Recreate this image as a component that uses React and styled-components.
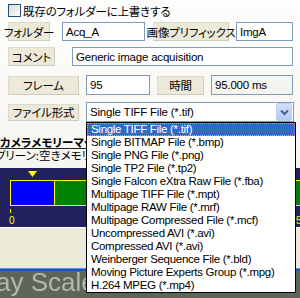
import React from "react";
import styled, { createGlobalStyle } from "styled-components";

const GlobalStyle = createGlobalStyle`
  * { box-sizing: border-box; }
  body {
    margin: 0;
    font-family: "Liberation Sans", "Noto Sans CJK JP", sans-serif;
    font-size: 11px;
  }
`;

const jp = `"Noto Sans CJK JP", "Liberation Sans", sans-serif`;

const Screen = styled.div`
  position: relative;
  width: 300px;
  height: 298px;
  overflow: hidden;
  display: flex;
  flex-direction: column;
`;

const FormPanel = styled.div`
  background: linear-gradient(#fdfdfc, #f6f5f0);
  padding: 4px 0 0 8px;
  display: flex;
  flex-direction: column;
  height: 168px;
`;

const Row = styled.div`
  display: flex;
  align-items: center;
  height: ${(p) => p.h || 19}px;
  margin-top: ${(p) => p.mt || 0}px;
`;

const CheckBox = styled.span`
  width: 13px;
  height: 13px;
  border: 1px solid #1c5180;
  background: linear-gradient(135deg, #dcdbd5, #fbfbfa);
  margin-right: 2px;
`;

const JpText = styled.span`
  font-family: ${jp};
  font-size: 11.5px;
  font-feature-settings: "palt";
  letter-spacing: -0.2px;
  color: #000;
  white-space: nowrap;
`;

const Caption = styled.div`
  width: ${(p) => p.w}px;
  height: ${(p) => p.h || 19}px;
  margin-right: ${(p) => p.mr || 0}px;
  background: #ece9d8;
  border: 1px solid #dedbcc;
  border-right-color: #cfccbc;
  border-bottom-color: #cfccbc;
  display: flex;
  align-items: center;
  justify-content: center;
  flex-shrink: 0;
`;

const Field = styled.div`
  width: ${(p) => p.w}px;
  height: ${(p) => p.h || 19}px;
  margin-right: ${(p) => p.mr || 0}px;
  border: 1px solid #7f9db9;
  background: ${(p) => (p.readOnly ? "#f5f4ef" : "#fff")};
  padding-left: 3px;
  display: flex;
  align-items: center;
  font-size: 11.5px;
  letter-spacing: -0.2px;
  color: #000;
  white-space: nowrap;
  overflow: hidden;
  flex-shrink: 0;
`;

const Combo = styled(Field)`
  padding-right: 1px;
  justify-content: space-between;
`;

const DropButton = styled.span`
  width: 16px;
  height: 18px;
  border: 1px solid #b9cdf6;
  border-radius: 2px;
  background: linear-gradient(#d2defc, #b4c9f7);
  display: flex;
  align-items: center;
  justify-content: center;
`;

const MapCaption = styled.div`
  margin-top: 14px;
  margin-left: -8px;
  font-family: ${jp};
  font-feature-settings: "palt";
  font-size: 11.5px;
  font-weight: bold;
  line-height: 12px;
  white-space: nowrap;
  border-bottom: 1px solid #222;
  width: 86px;
  overflow: hidden;
`;

const MapLegend = styled.div`
  margin-left: -13px;
  font-family: ${jp};
  font-feature-settings: "palt";
  font-size: 11.5px;
  line-height: 11px;
  white-space: nowrap;
  margin-top: 1px;
  width: 99px;
  overflow: hidden;
`;

const MapArea = styled.svg`
  display: block;
  width: 300px;
  height: 59px;
`;

const StatusPanel = styled.div`
  height: 41px;
  background: #ece9d8;
  border-top: 1px solid #fff;
`;

const Taskbar = styled.div`
  height: 3px;
  background: #1553cf;
  border-top: 1px solid #5b8ee8;
`;

const Desktop = styled.div`
  flex: 1;
  background: #5e6658;
  overflow: hidden;
`;

const DesktopText = styled.div`
  font-family: "Liberation Sans", sans-serif;
  font-size: 26px;
  line-height: 26px;
  color: #b4b8aa;
  margin: -2px 0 0 -4px;
  filter: blur(0.7px);
  white-space: nowrap;
`;

const List = styled.ul`
  position: absolute;
  left: 86px;
  top: 122px;
  width: 210px;
  margin: 0;
  padding: 0;
  list-style: none;
  background: #fff;
  border: 1px solid #000;
`;

const Item = styled.li`
  height: 13px;
  line-height: 11px;
  padding-left: 3px;
  font-size: 11.5px;
  letter-spacing: -0.3px;
  white-space: nowrap;
  color: ${(p) => (p.active ? "#fff" : "#000")};
  background: ${(p) => (p.active ? "#316ac5" : "transparent")};
  border: 1px dotted ${(p) => (p.active ? "#e4a548" : "transparent")};
`;

const formats = [
  "Single TIFF File (*.tif)",
  "Single BITMAP File (*.bmp)",
  "Single PNG File (*.png)",
  "Single TP2 File (*.tp2)",
  "Single Falcon eXtra Raw File (*.fba)",
  "Multipage TIFF File (*.mpt)",
  "Multipage RAW File (*.mrf)",
  "Multipage Compressed File (*.mcf)",
  "Uncompressed AVI (*.avi)",
  "Compressed AVI (*.avi)",
  "Weinberger Sequence File (*.bld)",
  "Moving Picture Experts Group (*.mpg)",
  "H.264 MPEG (*.mp4)",
];

function Chevron() {
  return (
    <svg width="9" height="7" viewBox="0 0 9 7">
      <path d="M1 1.5 L4.5 5 L8 1.5" fill="none" stroke="#4d6185" strokeWidth="2" />
    </svg>
  );
}

function MemoryMap() {
  return (
    <MapArea viewBox="0 0 300 59">
      <rect width="300" height="59" fill="#21215e" />
      <path d="M28 3 H37 L32.5 9 Z" fill="#ffff00" />
      <rect x="10.5" y="12.5" width="44" height="25" fill="#0000ff" stroke="#ffff00" />
      <rect x="54.5" y="12.5" width="260" height="25" fill="#008000" stroke="#ffff00" />
      <rect x="10" y="41" width="1" height="4" fill="#ffff00" />
      <text x="9" y="56" fill="#ffff00" fontSize="10" fontFamily="Liberation Sans, sans-serif">0</text>
      <text x="296" y="56" fill="#ffff00" fontSize="10" fontFamily="Liberation Sans, sans-serif">5</text>
    </MapArea>
  );
}

export default function App() {
  return (
    <Screen>
      <GlobalStyle />
      <FormPanel>
        <Row h={13}>
          <CheckBox />
          <JpText>既存のフォルダーに上書きする</JpText>
        </Row>
        <Row mt={5}>
          <Caption w={42} mr={12}><JpText>フォルダー</JpText></Caption>
          <Field w={83} mr={8}>Acq_A</Field>
          <Caption w={76} mr={7}><JpText>画像プリフィックス</JpText></Caption>
          <Field w={57}>ImgA</Field>
        </Row>
        <Row mt={6}>
          <Caption w={47} mr={17}><JpText>コメント</JpText></Caption>
          <Field w={221}>Generic image acquisition</Field>
        </Row>
        <Row mt={9} h={20}>
          <Caption w={71} mr={7}><JpText>フレーム</JpText></Caption>
          <Field w={64} h={20} mr={7}>95</Field>
          <Caption w={47} mr={7}><JpText>時間</JpText></Caption>
          <Field w={82} h={20} readOnly>95.000 ms</Field>
        </Row>
        <Row mt={7} h={20}>
          <Caption w={71} h={17} mr={7}><JpText>ファイル形式</JpText></Caption>
          <Combo w={208} h={20}>
            Single TIFF File (*.tif)
            <DropButton><Chevron /></DropButton>
          </Combo>
        </Row>
        <MapCaption>カメラメモリーマップ：</MapCaption>
        <MapLegend>グリーン:空きメモリー / ブルー:使用済みメモリー</MapLegend>
      </FormPanel>
      <MemoryMap />
      <StatusPanel />
      <Taskbar />
      <Desktop>
        <DesktopText>ay Scale</DesktopText>
      </Desktop>
      <List>
        {formats.map((f, i) => (
          <Item key={f} active={i === 0}>{f}</Item>
        ))}
      </List>
    </Screen>
  );
}
